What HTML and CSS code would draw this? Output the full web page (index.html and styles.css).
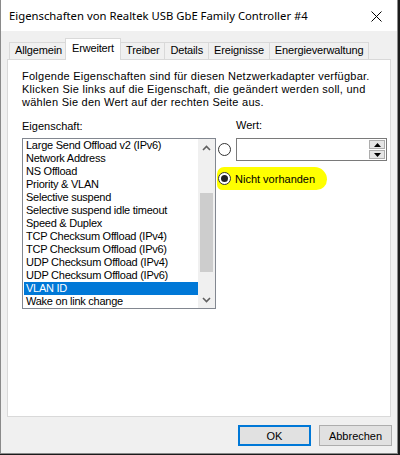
FILE: index.html
```html
<!DOCTYPE html>
<html lang="de">
<head>
  <meta charset="UTF-8">
  <title>Eigenschaften von Realtek USB GbE Family Controller #4</title>
  <link rel="stylesheet" href="styles.css">
</head>
<body>
  <div class="window">
    <header class="titlebar">
      <span class="title">Eigenschaften von Realtek USB GbE Family Controller #4</span>
      <svg class="close" width="11" height="11" viewBox="0 0 11 11">
        <path d="M0.5 0.5 L10.5 10.5 M10.5 0.5 L0.5 10.5" stroke="#000" stroke-width="1" fill="none"/>
      </svg>
    </header>

    <nav class="tabs">
      <span class="tab">Allgemein</span>
      <span class="tab active">Erweitert</span>
      <span class="tab">Treiber</span>
      <span class="tab">Details</span>
      <span class="tab">Ereignisse</span>
      <span class="tab">Energieverwaltung</span>
    </nav>

    <main class="panel">
      <p class="intro">Folgende Eigenschaften sind für diesen Netzwerkadapter verfügbar.<br>
        Klicken Sie links auf die Eigenschaft, die geändert werden soll, und<br>
        wählen Sie den Wert auf der rechten Seite aus.</p>

      <div class="columns">
        <div class="left-col">
          <label class="label">Eigenschaft:</label>
          <div class="listbox">
            <ul class="items">
              <li>Large Send Offload v2 (IPv6)</li>
              <li>Network Address</li>
              <li>NS Offload</li>
              <li>Priority &amp; VLAN</li>
              <li>Selective suspend</li>
              <li>Selective suspend idle timeout</li>
              <li>Speed &amp; Duplex</li>
              <li>TCP Checksum Offload (IPv4)</li>
              <li>TCP Checksum Offload (IPv6)</li>
              <li>UDP Checksum Offload (IPv4)</li>
              <li>UDP Checksum Offload (IPv6)</li>
              <li class="selected">VLAN ID</li>
              <li>Wake on link change</li>
            </ul>
            <div class="scrollbar">
              <div class="arrow">
                <svg width="9" height="6" viewBox="0 0 9 6"><path d="M1 5 L4.5 1.5 L8 5" stroke="#606060" stroke-width="1.6" fill="none"/></svg>
              </div>
              <div class="track"><div class="thumb"></div></div>
              <div class="arrow">
                <svg width="9" height="6" viewBox="0 0 9 6"><path d="M1 1 L4.5 4.5 L8 1" stroke="#606060" stroke-width="1.6" fill="none"/></svg>
              </div>
            </div>
          </div>
        </div>

        <div class="right-col">
          <label class="label value-label">Wert:</label>
          <div class="value-row">
            <span class="radio"></span>
            <div class="textbox">
              <div class="spinner">
                <span class="spin-btn">
                  <svg width="7" height="4" viewBox="0 0 7 4"><path d="M0 4 L3.5 0 L7 4 Z" fill="#000"/></svg>
                </span>
                <span class="spin-btn">
                  <svg width="7" height="4" viewBox="0 0 7 4"><path d="M0 0 L3.5 4 L7 0 Z" fill="#000"/></svg>
                </span>
              </div>
            </div>
          </div>
          <div class="none-row">
            <span class="radio checked"></span>
            <span class="none-text">Nicht vorhanden</span>
          </div>
        </div>
      </div>
    </main>

    <footer class="buttons">
      <button class="btn default">OK</button>
      <button class="btn">Abbrechen</button>
    </footer>
  </div>
</body>
</html>
```

FILE: styles.css
```css
body {
  margin: 0;
  background: #1b1b1b;
  font-family: "Liberation Sans", Arial, sans-serif;
  font-size: 11px;
  color: #000;
}
.window {
  width: 396px;
  height: 453px;
  background: #f0f0f0;
  border: 1px solid #8a8a8a;
  border-top: none;
  display: flex;
  flex-direction: column;
}
/* Title bar */
.titlebar {
  height: 31px;
  background: #fff;
  display: flex;
  align-items: center;
  justify-content: space-between;
  padding: 0 8px 0 8px;
}
.title {
  font-family: "Noto Sans", sans-serif;
  font-size: 11.3px;
  color: #000;
}
.close {
  margin-right: 7px;
  margin-top: 1px;
}
/* Tabs */
.tabs {
  display: flex;
  align-items: flex-end;
  padding: 7px 0 0 8px;
  height: 21px;
}
.tab {
  height: 16px;
  line-height: 15px;
  padding: 0 5px;
  letter-spacing: -0.15px;
  background: #f0f0f0;
  border: 1px solid #d9d9d9;
  border-bottom: none;
  margin-right: -1px;
  white-space: nowrap;
}
.tab.active {
  position: relative;
  z-index: 1;
  height: 21px;
  line-height: 18px;
  background: #fff;
  margin: 0 -1px -1px -2px;
  padding: 0 6px;
  border-color: #d9d9d9;
}
/* Panel */
.panel {
  margin: 0 6px;
  background: #fff;
  border: 1px solid #d9d9d9;
  padding: 10px 0 0 14px;
  box-sizing: border-box;
  height: 358px;
}
.intro {
  margin: 0;
  line-height: 13px;
  letter-spacing: 0.25px;
}
.columns {
  display: flex;
  margin-top: 10px;
}
.label {
  display: block;
  line-height: 13px;
}
.left-col {
  flex: none;
  width: 194px;
  padding-top: 1px;
}
.listbox {
  margin-top: 5px;
  height: 169px;
  border: 1px solid #828790;
  display: flex;
}
.items {
  list-style: none;
  margin: 0;
  padding: 0 0 0 1px;
  flex: 1;
  letter-spacing: -0.25px;
}
.items li {
  height: 13px;
  line-height: 13px;
  padding-left: 2px;
  white-space: nowrap;
}
.items li.selected {
  background: #0078d7;
  color: #fff;
}
.scrollbar {
  width: 17px;
  background: #f0f0f0;
  display: flex;
  flex-direction: column;
}
.arrow {
  height: 17px;
  display: flex;
  align-items: center;
  justify-content: center;
}
.track {
  flex: 1;
  padding-top: 37px;
}
.thumb {
  margin: 0 2px;
  height: 79px;
  background: #cdcdcd;
}
/* Value side */
.right-col {
  flex: none;
  padding-left: 2px;
}
.value-label {
  margin-left: 18px;
}
.value-row {
  display: flex;
  align-items: center;
  margin-top: 6px;
}
.radio {
  width: 11px;
  height: 11px;
  border: 1px solid #333;
  border-radius: 50%;
  background: #fff;
  display: inline-flex;
  align-items: center;
  justify-content: center;
  flex: none;
}
.radio.checked::after {
  content: "";
  width: 7px;
  height: 7px;
  border-radius: 50%;
  background: #222;
}
.textbox {
  margin-left: 5px;
  width: 148px;
  height: 21px;
  border: 1px solid #7a7a7a;
  background: #fff;
  display: flex;
  justify-content: flex-end;
  align-items: center;
  padding-right: 1px;
}
.spinner {
  display: flex;
  flex-direction: column;
  gap: 1px;
}
.spin-btn {
  width: 14px;
  height: 7px;
  border: 1px solid #adadad;
  background: #e5e5e5;
  display: flex;
  align-items: center;
  justify-content: center;
}
.none-row {
  display: inline-flex;
  align-items: center;
  margin-top: 6px;
  padding: 5px 12px 5px 1px;
  background: #ffff00;
  border-radius: 8px 14px 12px 6px;
  margin-left: -1px;
}
.none-text {
  margin-left: 4px;
}
/* Buttons */
.buttons {
  display: flex;
  justify-content: flex-end;
  gap: 8px;
  padding: 8px 5px 0 0;
}
.btn {
  width: 73px;
  height: 21px;
  font-family: "Liberation Sans", Arial, sans-serif;
  font-size: 11px;
  color: #000;
  background: #e1e1e1;
  border: 1px solid #adadad;
  padding: 0;
}
.btn.default {
  border: 2px solid #0078d7;
}
```
